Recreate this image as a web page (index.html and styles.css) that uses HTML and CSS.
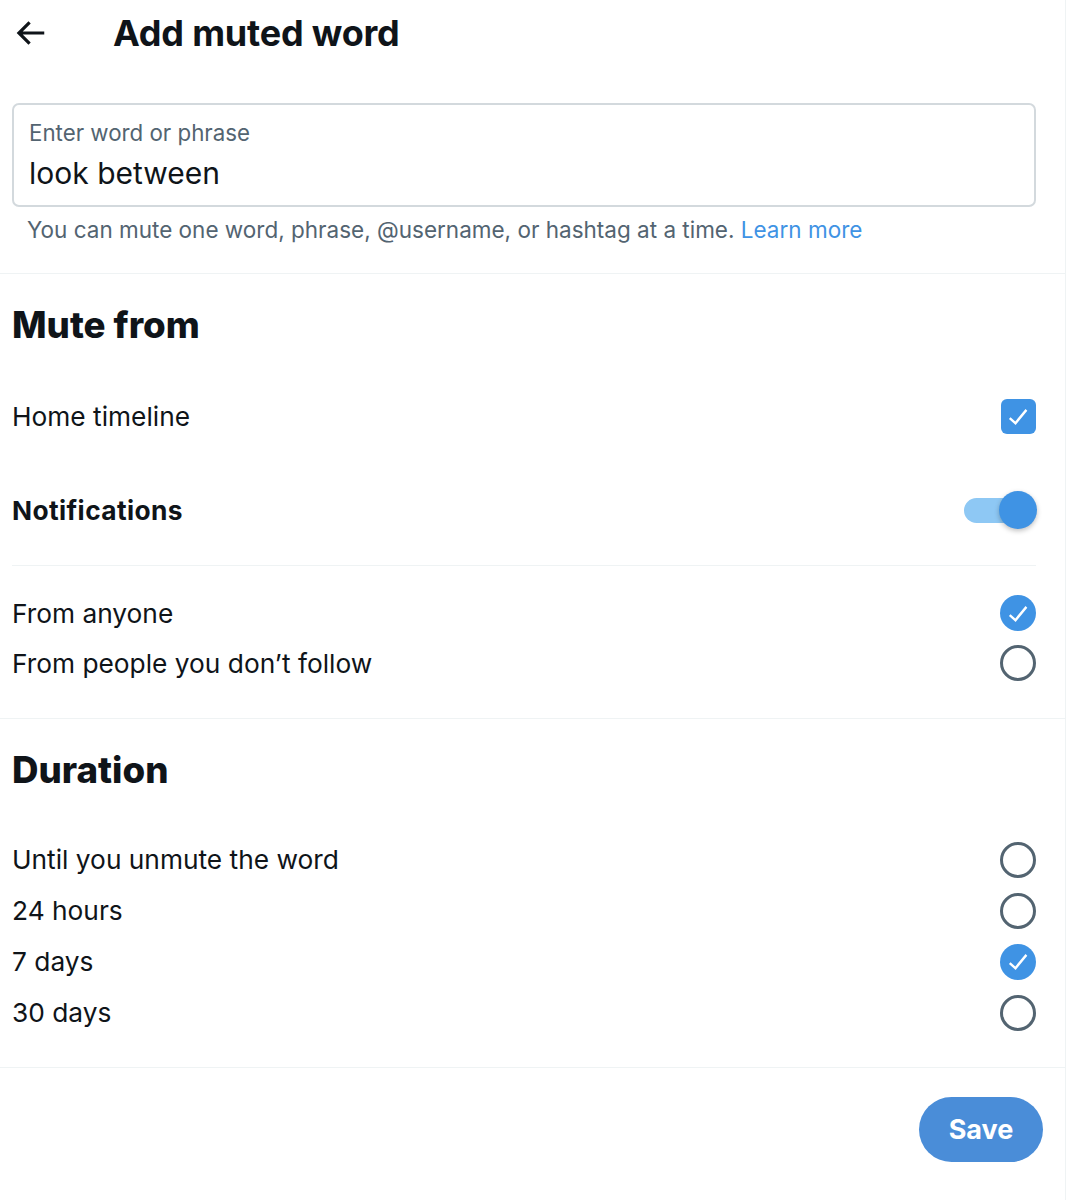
FILE: index.html
```html
<!DOCTYPE html>
<html lang="en">

<head>
    <meta charset="UTF-8">
    <meta name="viewport" content="width=device-width,initial-scale=1.0">
    <title>Add muted word</title>
    <link rel="stylesheet" href="styles.css">
</head>

<body>
    <main class="panel">
        <!-- Top bar -->
        <header class="topbar">
            <button class="back" aria-label="Back">
                <svg viewBox="0 0 24 24" width="38" height="38">
                    <path d="M7.414 13l5.043 5.04-1.414 1.42L3.586 12l7.457-7.46 1.414 1.42L7.414 11H21v2H7.414z" />
                </svg>
            </button>
            <h1 class="title">Add muted word</h1>
        </header>

        <!-- Word input -->
        <section class="word">
            <label class="field">
                <span class="field-label">Enter word or phrase</span>
                <input class="field-input" type="text" value="look between">
            </label>
            <p class="hint">You can mute one word, phrase, @username, or hashtag at a time. <a href="#">Learn more</a></p>
        </section>

        <!-- Mute from -->
        <section class="group">
            <h2 class="heading">Mute from</h2>
            <div class="row tall">
                <span>Home timeline</span>
                <span class="checkbox on">
                    <svg viewBox="0 0 24 24" width="29" height="29"><path d="M9.64 18.952l-5.55-4.861 1.317-1.504 3.951 3.459 8.459-10.155L19.3 7.17l-9.66 11.782z" /></svg>
                </span>
            </div>
            <div class="row tall">
                <b>Notifications</b>
                <span class="toggle"><span class="knob"></span></span>
            </div>
            <hr class="inset">
            <div class="options">
                <div class="row">
                    <span>From anyone</span>
                    <span class="radio on">
                        <svg viewBox="0 0 24 24" width="29" height="29"><path d="M9.64 18.952l-5.55-4.861 1.317-1.504 3.951 3.459 8.459-10.155L19.3 7.17l-9.66 11.782z" /></svg>
                    </span>
                </div>
                <div class="row">
                    <span>From people you don’t follow</span>
                    <span class="radio"></span>
                </div>
            </div>
        </section>

        <!-- Duration -->
        <section class="group">
            <h2 class="heading">Duration</h2>
            <div class="options duration">
                <div class="row">
                    <span>Until you unmute the word</span>
                    <span class="radio"></span>
                </div>
                <div class="row">
                    <span>24 hours</span>
                    <span class="radio"></span>
                </div>
                <div class="row">
                    <span>7 days</span>
                    <span class="radio on">
                        <svg viewBox="0 0 24 24" width="29" height="29"><path d="M9.64 18.952l-5.55-4.861 1.317-1.504 3.951 3.459 8.459-10.155L19.3 7.17l-9.66 11.782z" /></svg>
                    </span>
                </div>
                <div class="row">
                    <span>30 days</span>
                    <span class="radio"></span>
                </div>
            </div>
        </section>

        <footer class="actions">
            <button class="save">Save</button>
        </footer>
    </main>
</body>

</html>
```

FILE: styles.css
```css
/* Muted word form */
* {
    padding: 0;
    margin: 0;
    box-sizing: border-box;
    font-family: Inter, "Noto Sans", sans-serif;
}

body {
    background: #fff;
    color: #0f1419;
}

.panel {
    width: 1066px;
    min-height: 1200px;
    border-right: 1px solid #eff3f4;
}

/* Top bar */
.topbar {
    display: flex;
    align-items: center;
    height: 66px;
    padding-left: 11px;
}

.back {
    display: grid;
    place-items: center;
    width: 38px;
    height: 38px;
    border: none;
    background: none;
    cursor: pointer;
}

.back svg {
    fill: #0f1419;
}

.title {
    margin-left: 64px;
    font-size: 36px;
    font-weight: 700;
    letter-spacing: -0.2px;
}

/* Word input */
.word {
    padding: 37px 29px 28px 12px;
    border-bottom: 1px solid #eff3f4;
}

.field {
    display: flex;
    flex-direction: column;
    height: 104px;
    padding: 13px 15px 0;
    border: 2px solid #d3d9dd;
    border-radius: 7px;
}

.field-label {
    font-size: 22.3px;
    line-height: 30px;
    color: #536471;
}

.field-input {
    margin-top: 5px;
    border: none;
    outline: none;
    font-size: 30px;
    line-height: 40px;
    height: 40px;
    color: #0f1419;
    background: none;
}

.hint {
    margin-top: 8px;
    padding-left: 15px;
    font-size: 22.5px;
    line-height: 30px;
    color: #536471;
}

.hint a {
    color: #3f93e4;
    text-decoration: none;
}

/* Groups */
.group {
    padding: 29px 29px 0 12px;
    border-bottom: 1px solid #eff3f4;
}

.heading {
    font-size: 36.7px;
    line-height: 44px;
    font-weight: 800;
    margin-bottom: 22px;
}

.row {
    display: flex;
    justify-content: space-between;
    align-items: center;
    height: 50px;
    font-size: 26.3px;
}

.row.tall {
    height: 94px;
}

.row b {
    font-weight: 700;
    letter-spacing: 0.4px;
}

.inset {
    border: none;
    border-top: 1px solid #eff3f4;
    margin-top: 8px;
}

.options {
    padding: 22px 0 30px;
}

.duration {
    padding: 20px 0 29px;
}

.duration .row {
    height: 51px;
}

/* Controls */
.checkbox {
    display: grid;
    place-items: center;
    width: 35px;
    height: 35px;
    border-radius: 6px;
    background: #3f93e4;
}

.checkbox svg,
.radio svg {
    fill: #fff;
}

.radio {
    display: grid;
    place-items: center;
    width: 36px;
    height: 36px;
    border-radius: 50%;
    border: 3px solid #536471;
}

.radio.on {
    border: none;
    background: #3f93e4;
}

.toggle {
    position: relative;
    width: 72px;
    height: 25px;
    border-radius: 13px;
    background: #8ec8f4;
}

.knob {
    position: absolute;
    right: -1px;
    top: -7px;
    width: 38px;
    height: 38px;
    border-radius: 50%;
    background: #3f93e4;
    box-shadow: 0 2px 5px rgba(0, 0, 0, 0.25);
}

/* Save */
.actions {
    display: flex;
    justify-content: flex-end;
    padding: 29px 22px 0 0;
}

.save {
    width: 124px;
    height: 65px;
    border: none;
    border-radius: 33px;
    background: #4a8dd8;
    color: #fff;
    font-size: 27px;
    font-weight: 700;
    cursor: pointer;
}
```
